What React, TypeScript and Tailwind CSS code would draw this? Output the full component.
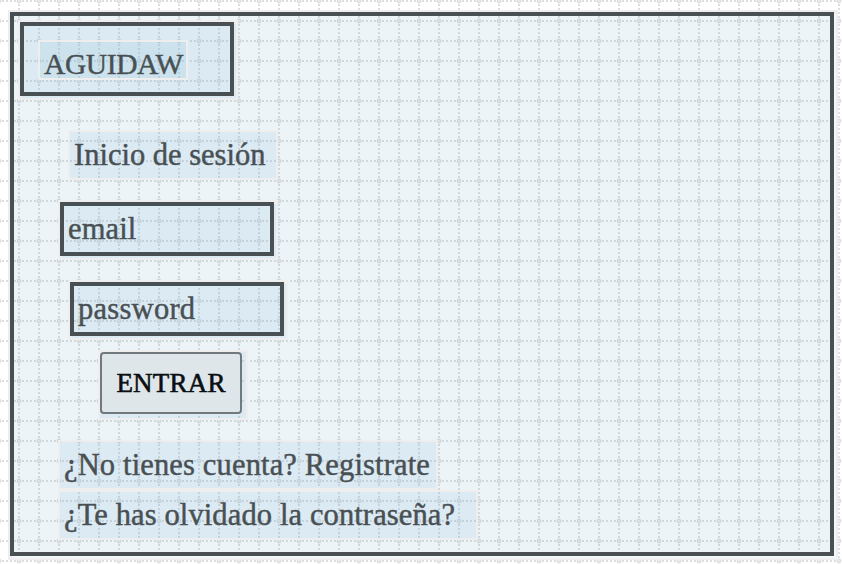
const type = "font-['Liberation_Serif',serif] whitespace-nowrap leading-8 [-webkit-text-stroke:0.45px_currentColor]";
const framed = "shrink-0 border-4 border-[#495053] bg-[#87b7dc]/15 bg-clip-padding shadow-[2px_2px_0_0_#dceaf3,1px_1px_0_3px_#eeeeee]";
const label = "shrink-0 bg-[#87b7dc]/15 pl-[4px] pt-[7px] outline-2 outline-[#eeeeee]";

function Grid() {
  return (
    <svg className="absolute inset-0 h-full w-full" aria-hidden="true">
      <defs>
        <pattern id="grid" x="9" y="11" width="20" height="20" patternUnits="userSpaceOnUse">
          <g fill="#000000" fillOpacity="0.13">
            <rect x="9" y="1" width="2" height="2" />
            <rect x="9" y="5" width="2" height="2" />
            <rect x="9" y="13" width="2" height="2" />
            <rect x="9" y="17" width="2" height="2" />
            <rect x="1" y="9" width="2" height="2" />
            <rect x="5" y="9" width="2" height="2" />
            <rect x="13" y="9" width="2" height="2" />
            <rect x="17" y="9" width="2" height="2" />
          </g>
          <circle cx="10" cy="10" r="1.7" fill="#000000" fillOpacity="0.05" stroke="#000000" strokeOpacity="0.11" strokeWidth="1.4" />
        </pattern>
      </defs>
      <rect width="100%" height="100%" fill="url(#grid)" />
    </svg>
  );
}

export default function App() {
  return (
    <div className="relative h-[564px] w-[842px] overflow-hidden bg-white pl-[10px] pt-[12px] text-[#495053]">
      <Grid />
      <main className={`relative flex h-[544px] w-[824px] flex-col items-start border-4 border-[#495053] bg-[#80b8d0]/15 pl-[6px] pt-[6px] text-[30.5px] shadow-[2px_2px_0_0_#f2f7fa,1px_1px_0_3px_#eeeeee] ${type}`}>
        <header className={`h-[74px] w-[214px] pl-[16px] pt-[16px] ${framed}`}>
          <h1 className="h-[36px] w-[146px] bg-[#71bbd2]/15 pl-[4px] pt-[6px] text-[29.5px] tracking-[-0.4px] outline-2 outline-[#eeeeee]">AGUIDAW</h1>
        </header>
        <h2 className={`ml-[50px] mt-[36px] h-[46px] w-[206px] ${label}`}>Inicio de sesión</h2>
        <div className={`ml-[40px] mt-[24px] h-[54px] w-[214px] pl-[4px] pt-[7px] tracking-[0.15px] ${framed}`}>email</div>
        <div className={`ml-[50px] mt-[26px] h-[54px] w-[214px] pl-[4px] pt-[7px] tracking-[0.27px] ${framed}`}>password</div>
        <div className="ml-[80px] mt-[16px] h-[66px] w-[146px] shrink-0 bg-[#87b7dc]/15 outline-2 outline-[#eeeeee]">
          <button className="flex h-[62px] w-[142px] items-center justify-center rounded-[4px] border-2 border-[#70797d] bg-[#dfe6e9] text-[27px] tracking-[0.2px] text-[#0a0f12] [-webkit-text-stroke:0.6px_currentColor]">ENTRAR</button>
        </div>
        <p className={`ml-[40px] mt-[24px] h-[46px] w-[376px] tracking-[0.15px] ${label}`}>¿No tienes cuenta? Registrate</p>
        <p className={`ml-[40px] mt-[4px] h-[46px] w-[416px] tracking-[0.12px] ${label}`}>¿Te has olvidado la contraseña?</p>
      </main>
    </div>
  );
}
